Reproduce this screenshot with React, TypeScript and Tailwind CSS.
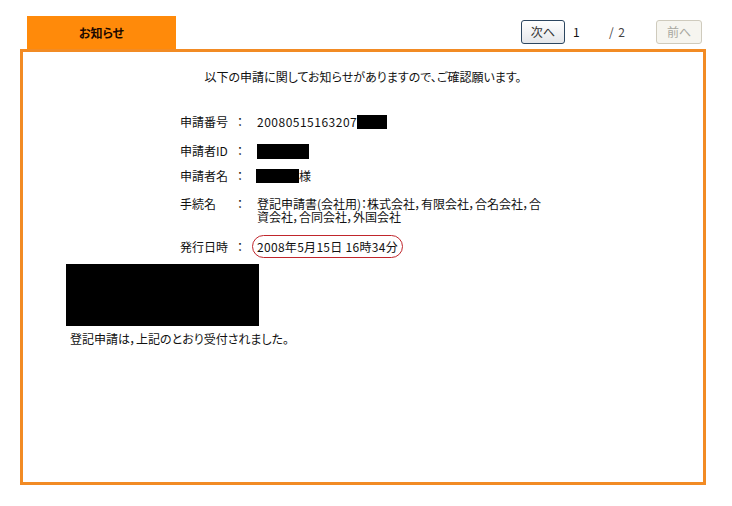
export default function App() {
  const font = "font-['Noto_Sans_CJK_JP','Noto_Sans_CJK_SC',sans-serif] [font-feature-settings:'palt']"
  return (
    <div className={`w-[732px] h-[506px] bg-white text-[12px] leading-[14px] text-[#111] ${font}`}>
      <div className="flex h-[49px] pl-[27px]">
        <div className="mt-[16px] w-[149px] h-[33px] bg-[#ff8a0a] flex items-center justify-center font-bold text-[#1a0800]">
          お知らせ
        </div>
        <div className="flex-1" />
        <div className="flex items-center h-[24px] mt-[20px] mr-[30px]">
          <button className="w-[44px] h-[24px] rounded-[3px] border border-[#2c4660] bg-gradient-to-b from-white to-[#e4e6ea] text-[#333] text-[12px]">
            次へ
          </button>
          <span className="ml-[8px] w-[8px] text-[12px]">1</span>
          <span className="ml-[28px] text-[12px] text-[#444] tracking-[1px]">/ 2</span>
          <button className="ml-[30px] w-[46px] h-[24px] rounded-[3px] border border-[#cfcbbd] bg-[#f6f5ef] text-[#a8a8a0] text-[12px]">
            前へ
          </button>
        </div>
      </div>
      <div className="ml-[20px] w-[686px] h-[436px] border-[3px] border-[#f28b24] flex flex-col">
        <p className="mt-[18px] text-center">以下の申請に関してお知らせがありますので、ご確認願います。</p>
        <div className="ml-[157px] mt-[31px] flex flex-col">
          <div className="flex h-[14px] items-center">
            <span className="w-[57px]">申請番号</span>
            <span className="w-[20px]">：</span>
            <span className="tracking-[0.5px]">20080515163207</span>
            <span className="w-[30px] h-[14px] bg-black" />
          </div>
          <div className="flex h-[14px] items-center mt-[15px]">
            <span className="w-[57px]">申請者ID</span>
            <span className="w-[20px]">：</span>
            <span className="w-[52px] h-[15px] bg-black" />
          </div>
          <div className="flex h-[14px] items-center mt-[11px]">
            <span className="w-[57px]">申請者名</span>
            <span className="w-[19px]">：</span>
            <span className="w-[43px] h-[14px] bg-black" />
            <span>様</span>
          </div>
          <div className="flex mt-[14px] leading-[13px]">
            <span className="w-[57px]">手続名</span>
            <span className="w-[20px]">：</span>
            <span className="w-[296px]">登記申請書(会社用)：株式会社，有限会社，合名会社，合資会社，合同会社，外国会社</span>
          </div>
          <div className="flex items-center mt-[12px] h-[23px]">
            <span className="w-[57px]">発行日時</span>
            <span className="w-[15px]">：</span>
            <span className="h-[23px] px-[4px] flex items-center rounded-[12px] border border-[#c0262c] tracking-[0.3px]">
              2008年5月15日 16時34分
            </span>
          </div>
        </div>
        <div className="ml-[43px] mt-[6px] w-[193px] h-[62px] bg-black" />
        <p className="ml-[47px] mt-[6px]">登記申請は，上記のとおり受付されました。</p>
      </div>
    </div>
  )
}
